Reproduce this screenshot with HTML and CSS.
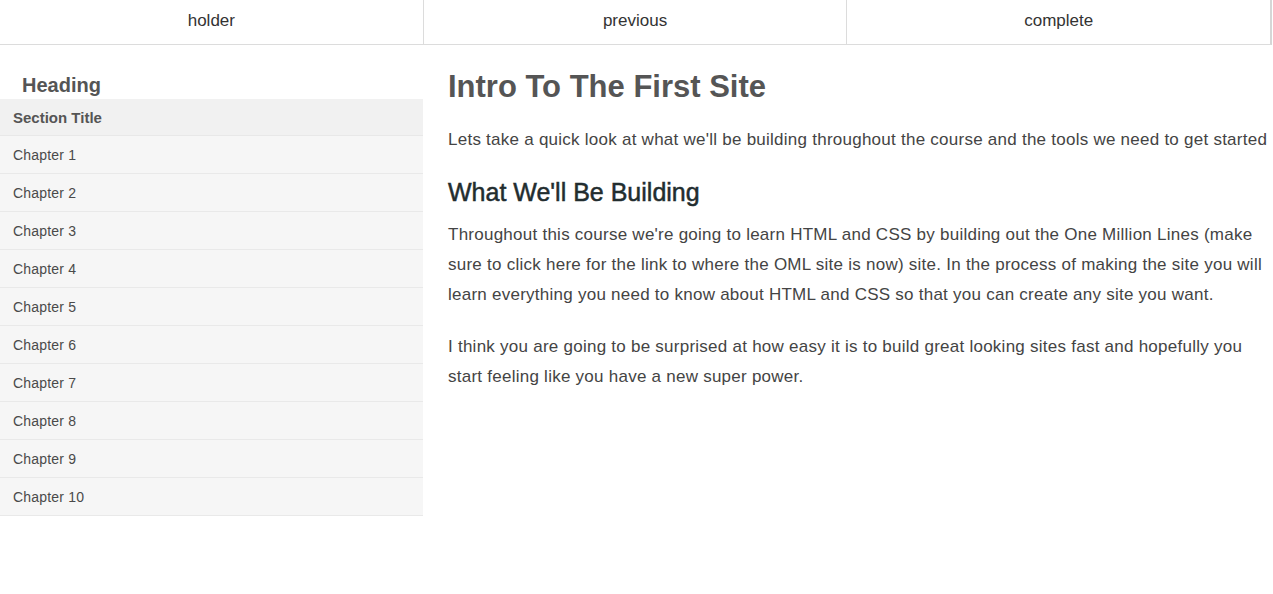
FILE: index.html
```html
<!DOCTYPE html>
<html>
<head>
<meta charset="utf-8">
<link rel="stylesheet" href="styles.css">
</head>
<body>
<nav class="topnav">
  <a class="navitem">holder</a>
  <a class="navitem">previous</a>
  <a class="navitem">complete</a>
</nav>
<div class="layout">
  <aside class="sidebar">
    <h3 class="side-heading">Heading</h3>
    <div class="section-title">Section Title</div>
    <ul class="chapters">
      <li>Chapter 1</li>
      <li>Chapter 2</li>
      <li>Chapter 3</li>
      <li>Chapter 4</li>
      <li>Chapter 5</li>
      <li>Chapter 6</li>
      <li>Chapter 7</li>
      <li>Chapter 8</li>
      <li>Chapter 9</li>
      <li>Chapter 10</li>
    </ul>
  </aside>
  <main class="content">
    <h1 class="title">Intro To The First Site</h1>
    <p class="lead">Lets take a quick look at what we'll be building throughout the course and the tools we need to get started</p>
    <h2 class="subtitle">What We'll Be Building</h2>
    <p class="body">Throughout this course we're going to learn HTML and CSS by building out the One Million Lines (make sure to click here for the link to where the OML site is now) site. In the process of making the site you will learn everything you need to know about HTML and CSS so that you can create any site you want.</p>
    <p class="body">I think you are going to be surprised at how easy it is to build great looking sites fast and hopefully you start feeling like you have a new super power.</p>
  </main>
</div>
</body>
</html>
```
FILE: styles.css
```css
* { box-sizing: border-box; }
html, body { margin: 0; padding: 0; background: #fff; }
body {
  font-family: "Liberation Sans", Arial, sans-serif;
  color: #444;
  overflow: hidden;
}
.topnav {
  display: flex;
  width: 1272px;
  height: 45px;
  border-bottom: 1px solid #dcdcdc;
  border-right: 2px solid #d6d6d6;
}
.navitem {
  flex: 1;
  display: flex;
  align-items: center;
  justify-content: center;
  padding-bottom: 2px;
  font-size: 17px;
  color: #333;
  border-right: 1px solid #dcdcdc;
}
.navitem:last-child { border-right: none; }
.layout {
  display: flex;
  gap: 25px;
}
.sidebar {
  width: 423px;
  flex: none;
  padding-top: 27px;
}
.side-heading {
  margin: 0;
  padding-left: 22px;
  font-size: 20px;
  line-height: 27px;
  font-weight: bold;
  color: #555;
}
.section-title {
  background: #f1f1f1;
  height: 37px;
  padding-left: 13px;
  display: flex;
  align-items: center;
  font-size: 15px;
  font-weight: bold;
  color: #555;
  border-bottom: 1px solid #e8e8e8;
}
.chapters {
  list-style: none;
  margin: 0;
  padding: 0;
}
.chapters li {
  height: 38px;
  display: flex;
  align-items: center;
  padding-left: 13px;
  background: #f6f6f6;
  border-bottom: 1px solid #e9e9e9;
  font-size: 14px;
  letter-spacing: 0.2px;
  color: #4a4a4a;
}
.content {
  flex: 1;
  min-width: 0;
  padding-top: 22px;
  padding-right: 8px;
}
.title {
  margin: 0;
  font-size: 31px;
  line-height: 40px;
  font-weight: bold;
  color: #555;
}
.lead {
  margin: 18px 0 0;
  font-size: 17px;
  letter-spacing: 0.25px;
  line-height: 30px;
  color: #444;
  white-space: nowrap;
}
.subtitle {
  margin: 22px 0 0;
  font-size: 25px;
  line-height: 30px;
  font-weight: normal;
  color: #222d2f;
  -webkit-text-stroke: 0.5px #222d2f;
}
.body {
  margin: 13px 0 0;
  font-size: 17px;
  letter-spacing: 0.25px;
  line-height: 30px;
  color: #444;
}
.body + .body { margin-top: 22px; }
```
